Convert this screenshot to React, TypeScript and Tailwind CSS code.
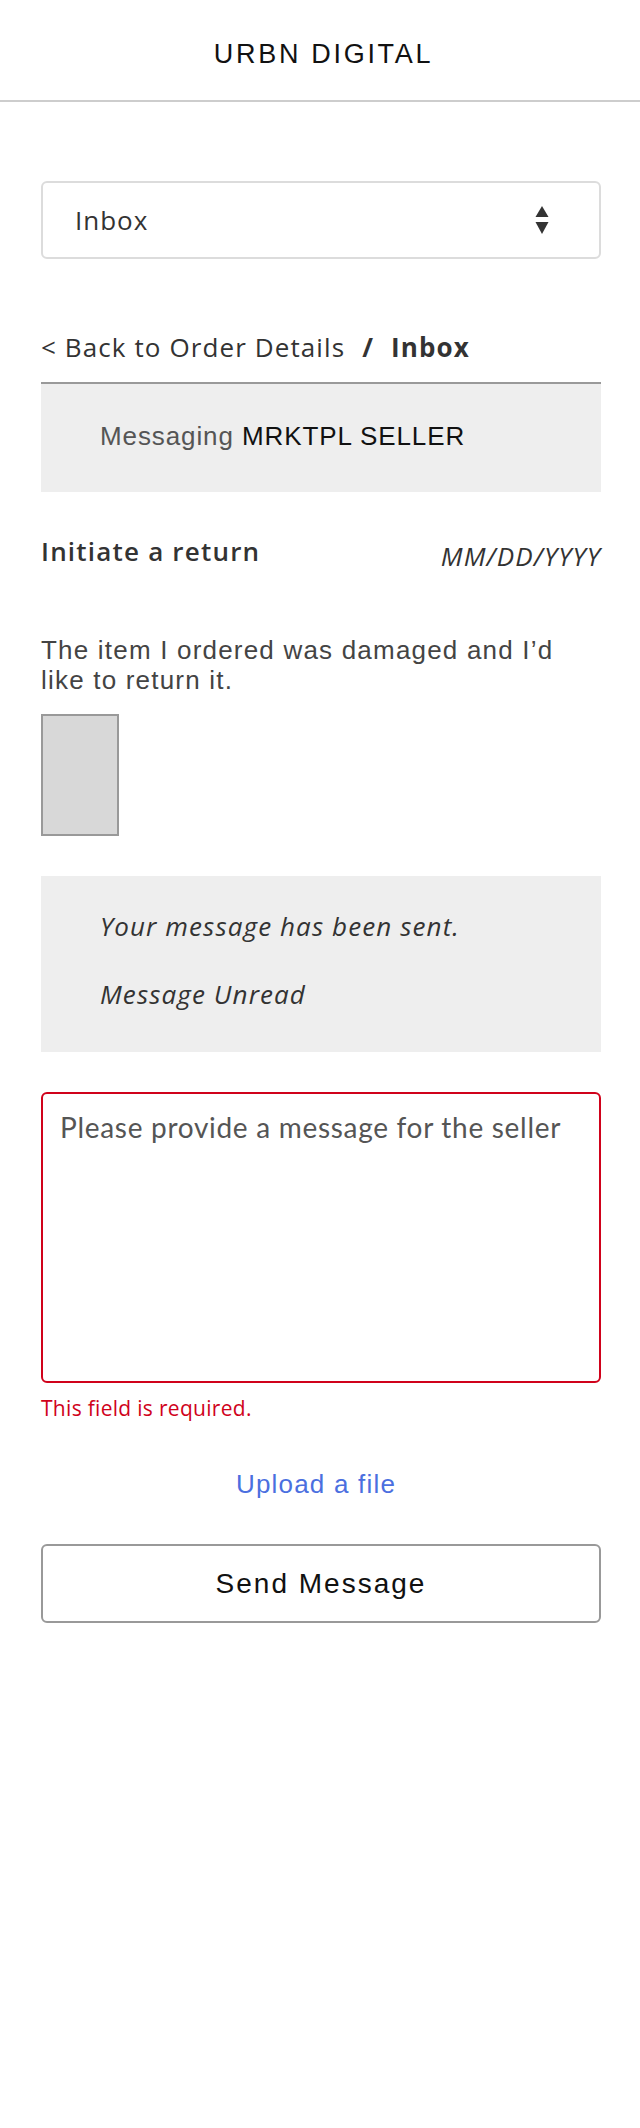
import React from 'react';

function SortArrows() {
    return (
        <svg width="14" height="30" viewBox="0 0 14 30" aria-hidden="true">
            <path d="M7 1 L13.5 12 L0.5 12 Z" fill="#333" />
            <path d="M0.5 17 L13.5 17 L7 29 Z" fill="#333" />
        </svg>
    );
}

function App() {
    return (
        <div className="min-h-[2128px] bg-white">
            {/* top bar */}
            <header className="flex h-[102px] items-center justify-center border-b-2 border-[#cdcdcd] pt-[9px]">
                <h1 className="pl-[7px] font-['Liberation_Sans',Arial,sans-serif] text-[27px] tracking-[0.1em] text-[#111]">
                    URBN DIGITAL
                </h1>
            </header>

            <main className="pl-[41px] pr-[39px]">
                {/* folder select */}
                <div className="mt-[79px] flex h-[78px] items-center justify-between rounded-[6px] border-2 border-[#dcdcdc] pl-[32px] pr-[50px]">
                    <span className="font-['Open_Sans',sans-serif] text-[26px] tracking-[1px] text-[#333]">Inbox</span>
                    <SortArrows />
                </div>

                {/* breadcrumb */}
                <nav className="mt-[70px] flex items-baseline font-['Open_Sans',sans-serif] text-[26px] leading-[36px] tracking-[1.1px] text-[#333]">
                    <span>&lt; Back to Order Details</span>
                    <span className="mx-[17px] font-bold">/</span>
                    <span className="font-bold">Inbox</span>
                </nav>

                <div className="mt-[17px] border-t-2 border-[#999] bg-[#eee] pt-[38px] pb-[41px] pl-[59px] font-['Liberation_Sans',Arial,sans-serif] text-[26px] leading-[29px] tracking-[0.9px]">
                    <span className="text-[#555]">Messaging</span> <span className="text-[#111]">MRKTPL SELLER</span>
                </div>

                {/* message thread */}
                <div className="mt-[41px] flex items-start justify-between font-['Open_Sans',sans-serif] text-[26px] leading-[36px] text-[#333]">
                    <h2 className="font-semibold tracking-[1.2px]">Initiate a return</h2>
                    <span className="mt-[5px] italic tracking-[1.1px]">MM/DD/YYYY</span>
                </div>

                <p className="mt-[61px] max-w-[545px] font-['Liberation_Sans',Arial,sans-serif] text-[26px] leading-[30px] tracking-[1.2px] text-[#444]">
                    The item I ordered was damaged and I’d like to return it.
                </p>

                <div className="mt-[19px] h-[122px] w-[78px] border-2 border-[#999] bg-[#d8d8d8]" />

                <div className="mt-[40px] h-[176px] bg-[#eee] pl-[59px] pt-[32px] font-['Open_Sans',sans-serif] text-[26px] italic leading-[36px] tracking-[1.1px] text-[#333]">
                    <p>Your message has been sent.</p>
                    <p className="mt-[32px]">Message Unread</p>
                </div>

                {/* reply form */}
                <textarea
                    className="mt-[40px] block h-[291px] w-full resize-none rounded-[6px] border-2 border-[#d0021b] pl-[17px] pt-[16px] font-['Lato',sans-serif] text-[28px] leading-[34px] tracking-[0.7px] text-[#333] outline-none placeholder:text-[#555]"
                    placeholder="Please provide a message for the seller"
                />
                <p className="mt-[11px] font-['Open_Sans',sans-serif] text-[21px] leading-[29px] tracking-[0.3px] text-[#d0021b]">
                    This field is required.
                </p>

                <div className="mt-[47px] pr-[10px] text-center">
                    <a className="cursor-pointer font-['Liberation_Sans',Arial,sans-serif] text-[26px] leading-[29px] tracking-[1.2px] text-[#4b6fdf]">
                        Upload a file
                    </a>
                </div>

                <button className="mt-[45px] flex h-[79px] w-full items-center justify-center rounded-[6px] border-2 border-[#999] font-['Liberation_Sans',Arial,sans-serif] text-[28px] tracking-[2px] text-[#111]">
                    Send Message
                </button>
            </main>
        </div>
    );
}

export default App;
